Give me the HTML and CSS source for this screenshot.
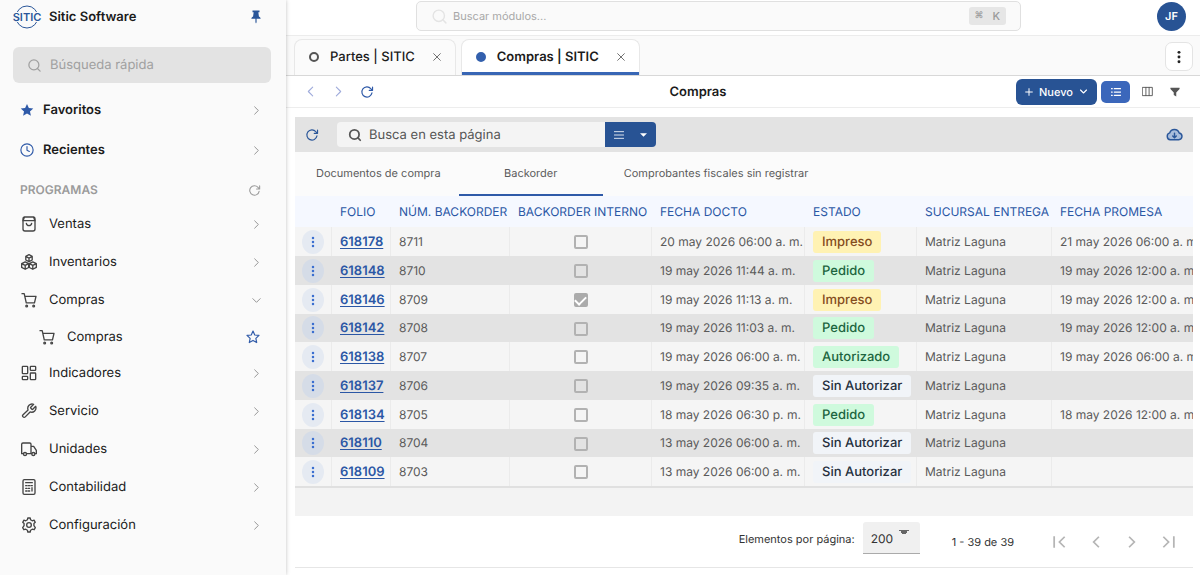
FILE: index.html
```html
<!DOCTYPE html>
<html lang="es">
<head>
<meta charset="utf-8">
<meta name="viewport" content="width=device-width, initial-scale=1">
<title>Compras | SITIC</title>
<link rel="stylesheet" href="styles.css">
</head>
<body>
<svg class="sprite" aria-hidden="true">
  <symbol id="i-search" viewBox="0 0 24 24"><circle cx="11" cy="11" r="8"/><path d="m21 21-4.3-4.3"/></symbol>
  <symbol id="i-right" viewBox="0 0 24 24"><path d="m8 4 8 8-8 8"/></symbol>
  <symbol id="i-left" viewBox="0 0 24 24"><path d="m16 4-8 8 8 8"/></symbol>
  <symbol id="i-down" viewBox="0 0 24 24"><path d="m4 8 8 8 8-8"/></symbol>
  <symbol id="i-reload" viewBox="0 0 24 24"><path d="M20.5 13.5A8.7 8.7 0 1 1 18.500 6.200L21.500 9.200M21.500 3.500v5.700h-5.700"/></symbol>
  <symbol id="i-close" viewBox="0 0 24 24"><path d="m4 4 16 16M20 4 4 20"/></symbol>
  <symbol id="i-dots" viewBox="0 0 24 24"><circle cx="12" cy="4" r="2.500"/><circle cx="12" cy="12" r="2.500"/><circle cx="12" cy="20" r="2.500"/></symbol>
  <symbol id="i-cart" viewBox="0 0 24 24"><path d="M1.500 2.500h3.300l3.100 13.700h12.300L22.500 6.500H6"/><circle cx="8.500" cy="21" r="1.300"/><circle cx="19" cy="21" r="1.300"/></symbol>
</svg>
<div class="app">
  <aside class="sidebar">
    <header class="brand">
      <svg class="logo" viewBox="0 0 30 24" aria-label="SITIC"><circle cx="15" cy="12" r="11"/><rect x="0" y="7" width="30" height="10"/><text x="15" y="16" text-anchor="middle">SITIC</text></svg>
      <strong>Sitic Software</strong>
      <button class="plain pin" aria-label="Fijar menú"><svg class="fill" viewBox="0 0 24 24" width="14" height="14"><path d="M6 1h12v3h-2l1 7c2 1 3 2.500 3 4h-7v6l-1 2-1-2v-6H4c0-1.500 1-3 3-4l1-7H6z"/></svg></button>
    </header>
    <label class="quick"><svg width="15" height="15"><use href="#i-search"/></svg><input type="search" placeholder="Búsqueda rápida" aria-label="Búsqueda rápida"></label>
    <nav>
      <a class="top-link" href="#"><svg class="fill blue" viewBox="0 0 24 24" width="14" height="14"><path d="m12 1.500 3.200 7 7.600.8-5.700 5.100 1.600 7.500-6.700-3.800-6.700 3.800 1.600-7.500L1.200 9.300l7.600-.8z"/></svg><span>Favoritos</span><svg class="chev"><use href="#i-right"/></svg></a>
      <a class="top-link" href="#"><svg class="blue" viewBox="0 0 24 24" width="14" height="14"><circle cx="12" cy="12" r="10.500"/><path d="M12 6v6.500l4 2"/></svg><span>Recientes</span><svg class="chev"><use href="#i-right"/></svg></a>
      <div class="section"><span>PROGRAMAS</span><button class="plain" aria-label="Recargar programas"><svg width="13" height="13"><use href="#i-reload"/></svg></button></div>
      <a class="link" href="#"><svg class="ico" viewBox="0 0 24 24"><rect x="3" y="1.500" width="18" height="21" rx="3"/><path d="M3 7h18M8 11c.8 4.500 7.200 4.500 8 0M5 2 3.500 6M19 2l1.500 4"/></svg><span>Ventas</span><svg class="chev"><use href="#i-right"/></svg></a>
      <a class="link" href="#"><svg class="ico" viewBox="0 0 24 24"><path d="m12 1 4.800 2.500v5.500L12 11.500 7.200 9V3.500zM7.200 3.700 12 6.300l4.800-2.600M12 6.300v5.200M6.300 11.700l5.200 2.600v5.900l-5.200 2.700-5.300-2.700v-5.900zM1 14.400l5.300 2.700 5.200-2.700M6.300 17.100v5.700M17.700 11.700l5.300 2.600v5.900l-5.300 2.700-5.200-2.700v-5.900zM12.500 14.400l5.200 2.700 5.300-2.700M17.700 17.100v5.700"/></svg><span>Inventarios</span><svg class="chev"><use href="#i-right"/></svg></a>
      <a class="link" href="#"><svg class="ico"><use href="#i-cart"/></svg><span>Compras</span><svg class="chev"><use href="#i-down"/></svg></a>
      <div class="sub"><a class="link" href="#"><svg class="ico"><use href="#i-cart"/></svg><span>Compras</span></a><button class="plain star" aria-label="Agregar a favoritos"><svg class="blue" viewBox="0 0 24 24" width="14" height="14"><path d="m12 1.800 3 6.700 7.300.8-5.400 5 1.500 7.200-6.400-3.700-6.400 3.700 1.500-7.200-5.400-5 7.300-.8z"/></svg></button></div>
      <a class="link" href="#"><svg class="ico" viewBox="0 0 24 24"><rect x="2" y="2" width="8" height="11" rx="1"/><rect x="14" y="2" width="8" height="6" rx="1"/><rect x="2" y="17" width="8" height="5" rx="1"/><rect x="14" y="12" width="8" height="10" rx="1"/></svg><span>Indicadores</span><svg class="chev"><use href="#i-right"/></svg></a>
      <a class="link" href="#"><svg class="ico" viewBox="0 0 24 24"><path d="M14.700 6.300a1 1 0 0 0 0 1.400l1.600 1.600a1 1 0 0 0 1.400 0l4.300-4.300a6.500 6.500 0 0 1-8.400 8.400l-7.200 7.400a2.300 2.300 0 0 1-3.300-3.300l7.500-7.100a6.500 6.500 0 0 1 8.400-8.400z"/></svg><span>Servicio</span><svg class="chev"><use href="#i-right"/></svg></a>
      <a class="link" href="#"><svg class="ico" viewBox="0 0 24 24"><path d="M3.500 19H1V5a2 2 0 0 1 2-2h10a2 2 0 0 1 2 2v14H8.500M15 8h4l4 6v5h-2M15 19h1"/><circle cx="6" cy="19.500" r="2.300"/><circle cx="18.500" cy="19.500" r="2.300"/></svg><span>Unidades</span><svg class="chev"><use href="#i-right"/></svg></a>
      <a class="link" href="#"><svg class="ico" viewBox="0 0 24 24"><rect x="3" y="1" width="18" height="22" rx="2"/><path d="M7 5.500h10M7 10h2M11 10h2M15 10h2M7 14h2M11 14h2M16.500 13v5M7 18h2M11 18h2"/></svg><span>Contabilidad</span><svg class="chev"><use href="#i-right"/></svg></a>
      <a class="link" href="#"><svg class="ico" viewBox="0 0 24 24"><path d="M9.600 4.200 10.200 1.500h3.600l.6 2.700 2.500 1.500 2.700-.9 1.800 3.200-2 1.900v3.200l2.100 2.900-1.800 3.100-2.800-.8-2.500 1.500-.6 2.700h-3.600l-.6-2.700-2.500-1.500-2.800.8-1.800-3.100 2.100-2.900V9.900l-2-1.900 1.800-3.200 2.700.9z"/><circle cx="12" cy="12" r="3.500"/></svg><span>Configuración</span><svg class="chev"><use href="#i-right"/></svg></a>
    </nav>
  </aside>

  <main class="main">
    <header class="topbar">
      <label class="modules"><svg width="17" height="17"><use href="#i-search"/></svg><input type="search" placeholder="Buscar módulos..." aria-label="Buscar módulos"><kbd><span class="cmd">⌘</span><span>K</span></kbd></label>
      <button class="avatar">JF</button>
    </header>
    <div class="tabs">
      <div class="tab"><i class="dot"></i><a href="#">Partes | SITIC</a><button class="plain" aria-label="Cerrar Partes"><svg width="10" height="10"><use href="#i-close"/></svg></button></div>
      <div class="tab active"><i class="dot"></i><a href="#">Compras | SITIC</a><button class="plain" aria-label="Cerrar Compras"><svg width="10" height="10"><use href="#i-close"/></svg></button></div>
      <button class="more" aria-label="Más opciones"><svg class="fill" width="14" height="14"><use href="#i-dots"/></svg></button>
    </div>
    <div class="pagebar">
      <div class="history">
        <button class="plain soft" aria-label="Atrás"><svg width="13" height="13"><use href="#i-left"/></svg></button>
        <button class="plain soft" aria-label="Adelante"><svg width="13" height="13"><use href="#i-right"/></svg></button>
        <button class="plain blue" aria-label="Recargar"><svg width="14" height="14"><use href="#i-reload"/></svg></button>
      </div>
      <h1>Compras</h1>
      <div class="actions">
        <button class="new"><svg viewBox="0 0 24 24" width="8" height="8"><path d="M12 2v20M2 12h20"/></svg>Nuevo<svg class="bold" width="9" height="9"><use href="#i-down"/></svg></button>
        <button class="view on" aria-label="Lista"><svg viewBox="0 0 24 24" width="10" height="10"><path d="M8 4h15M8 12h15M8 20h15M1 4h2M1 12h2M1 20h2"/></svg></button>
        <button class="view cols" aria-label="Columnas"><svg viewBox="0 0 24 24" width="11" height="11"><path d="M1.500 3h21v18h-21zM8.500 3v18M15.500 3v18"/></svg></button>
        <button class="view filter" aria-label="Filtrar"><svg class="fill" viewBox="0 0 24 24" width="10" height="10"><path d="M1 2h22v3l-8 8v10l-6-4v-6L1 5z"/></svg></button>
      </div>
    </div>

    <section class="card">
      <div class="tools">
        <button class="plain refresh" aria-label="Actualizar"><svg width="14" height="14"><use href="#i-reload"/></svg></button>
        <div class="find">
          <label><svg width="14" height="14"><use href="#i-search"/></svg><input type="search" placeholder="Busca en esta página" aria-label="Busca en esta página"></label>
          <button aria-label="Opciones de búsqueda"><svg viewBox="0 0 24 24" width="10" height="10"><path d="M1 4h22M1 12h22M1 20h22"/></svg><svg class="fill" viewBox="0 0 8 4" width="7" height="4"><path d="M0 0h8L4 4z"/></svg></button>
        </div>
        <button class="plain cloud" aria-label="Descargar"><svg viewBox="0 0 24 18" width="17" height="13"><path class="tint" d="M6 16.500a5 5 0 0 1-.8-9.700 7 7 0 0 1 13.400 0A4.900 4.900 0 0 1 18 16.500z"/><path d="M12 7v6M9.500 11l2.500 2.500 2.500-2.500"/></svg></button>
      </div>
      <nav class="subtabs"><a href="#">Documentos de compra</a><a class="current" href="#">Backorder</a><a href="#">Comprobantes fiscales sin registrar</a></nav>
      <div class="scroll">
      <table>
        <colgroup><col class="c-menu"><col class="c-folio"><col class="c-num"><col class="c-int"><col class="c-date"><col class="c-state"><col class="c-branch"><col></colgroup>
        <thead><tr><th></th><th>FOLIO</th><th>NÚM. BACKORDER</th><th>BACKORDER INTERNO</th><th>FECHA DOCTO</th><th>ESTADO</th><th>SUCURSAL ENTREGA</th><th>FECHA PROMESA</th></tr></thead>
        <tbody>
          <tr><td><button class="row-menu" aria-label="Menú 618178"><svg><use href="#i-dots"/></svg></button></td><td><a href="#">618178</a></td><td>8711</td><td><input type="checkbox" aria-label="Interno 8711"></td><td>20 may 2026 06:00 a. m.</td><td><span class="chip yellow">Impreso</span></td><td>Matriz Laguna</td><td>21 may 2026 06:00 a. m.</td></tr>
          <tr><td><button class="row-menu" aria-label="Menú 618148"><svg><use href="#i-dots"/></svg></button></td><td><a href="#">618148</a></td><td>8710</td><td><input type="checkbox" aria-label="Interno 8710"></td><td>19 may 2026 11:44 a. m.</td><td><span class="chip green">Pedido</span></td><td>Matriz Laguna</td><td>19 may 2026 12:00 a. m.</td></tr>
          <tr><td><button class="row-menu" aria-label="Menú 618146"><svg><use href="#i-dots"/></svg></button></td><td><a href="#">618146</a></td><td>8709</td><td><input type="checkbox" checked aria-label="Interno 8709"></td><td>19 may 2026 11:13 a. m.</td><td><span class="chip yellow">Impreso</span></td><td>Matriz Laguna</td><td>19 may 2026 12:00 a. m.</td></tr>
          <tr><td><button class="row-menu" aria-label="Menú 618142"><svg><use href="#i-dots"/></svg></button></td><td><a href="#">618142</a></td><td>8708</td><td><input type="checkbox" aria-label="Interno 8708"></td><td>19 may 2026 11:03 a. m.</td><td><span class="chip green">Pedido</span></td><td>Matriz Laguna</td><td>19 may 2026 12:00 a. m.</td></tr>
          <tr><td><button class="row-menu" aria-label="Menú 618138"><svg><use href="#i-dots"/></svg></button></td><td><a href="#">618138</a></td><td>8707</td><td><input type="checkbox" aria-label="Interno 8707"></td><td>19 may 2026 06:00 a. m.</td><td><span class="chip green">Autorizado</span></td><td>Matriz Laguna</td><td>19 may 2026 06:00 a. m.</td></tr>
          <tr><td><button class="row-menu" aria-label="Menú 618137"><svg><use href="#i-dots"/></svg></button></td><td><a href="#">618137</a></td><td>8706</td><td><input type="checkbox" aria-label="Interno 8706"></td><td>19 may 2026 09:35 a. m.</td><td><span class="chip">Sin Autorizar</span></td><td>Matriz Laguna</td><td></td></tr>
          <tr><td><button class="row-menu" aria-label="Menú 618134"><svg><use href="#i-dots"/></svg></button></td><td><a href="#">618134</a></td><td>8705</td><td><input type="checkbox" aria-label="Interno 8705"></td><td>18 may 2026 06:30 p. m.</td><td><span class="chip green">Pedido</span></td><td>Matriz Laguna</td><td>18 may 2026 12:00 a. m.</td></tr>
          <tr><td><button class="row-menu" aria-label="Menú 618110"><svg><use href="#i-dots"/></svg></button></td><td><a href="#">618110</a></td><td>8704</td><td><input type="checkbox" aria-label="Interno 8704"></td><td>13 may 2026 06:00 a. m.</td><td><span class="chip">Sin Autorizar</span></td><td>Matriz Laguna</td><td></td></tr>
          <tr><td><button class="row-menu" aria-label="Menú 618109"><svg><use href="#i-dots"/></svg></button></td><td><a href="#">618109</a></td><td>8703</td><td><input type="checkbox" aria-label="Interno 8703"></td><td>13 may 2026 06:00 a. m.</td><td><span class="chip">Sin Autorizar</span></td><td>Matriz Laguna</td><td></td></tr>
        </tbody>
      </table>
      </div>
      <footer class="pager">
        <label for="size">Elementos por página:</label>
        <select id="size"><option>200</option></select>
        <span class="range">1 - 39 de 39</span>
        <div class="pages">
          <button class="plain" disabled aria-label="Primera página"><svg viewBox="0 0 24 24"><path d="M2 2v20M20 3l-9 9 9 9"/></svg></button>
          <button class="plain" disabled aria-label="Página anterior"><svg viewBox="0 0 24 24"><path d="m17 3-9 9 9 9"/></svg></button>
          <button class="plain" disabled aria-label="Página siguiente"><svg viewBox="0 0 24 24"><path d="m7 3 9 9-9 9"/></svg></button>
          <button class="plain" disabled aria-label="Última página"><svg viewBox="0 0 24 24"><path d="M22 2v20M4 3l9 9-9 9"/></svg></button>
        </div>
      </footer>
    </section>
  </main>
</div>
</body>
</html>
```
FILE: styles.css
```css
* { box-sizing: border-box; }
body { margin: 0; font: 13px/16px Inter, "Liberation Sans", sans-serif; color: #1b1b1b; background: #fff; text-rendering: geometricPrecision; }
a { color: inherit; text-decoration: none; }
button, input, select { font: inherit; color: inherit; text-rendering: inherit; }
button { display: flex; align-items: center; justify-content: center; border: 0; padding: 0; }
input { border: 0; outline: 0; padding: 0; min-width: 0; background: none; }
svg { flex: none; display: block; fill: none; stroke: currentColor; stroke-width: 2; stroke-linecap: round; stroke-linejoin: round; }
svg.fill { fill: currentColor; stroke: none; }
.sprite { width: 0; height: 0; position: absolute; }
.plain { background: none; }
.blue { color: #2f5aa8; }

.app { display: flex; min-height: 100vh; }
.sidebar { flex: none; width: 286px; background: #fafafa; box-shadow: 0 0 4px rgba(0, 0, 0, 0.25); z-index: 1; padding: 0 15px 0 13px; }
.brand { display: flex; align-items: center; height: 33px; gap: 7px; padding-right: 8px; }
.brand strong { flex: 1; font-weight: 600; }
.logo { width: 30px; height: 24px; margin-left: -1px; color: #2a5699; stroke-width: 1; }
.logo rect { fill: #fafafa; stroke: none; }
.logo text { font: 600 11px Inter, sans-serif; fill: currentColor; stroke: none; }
.pin { color: #2a5699; }
.quick { display: flex; align-items: center; gap: 8px; height: 36px; margin: 14px 0 7px; padding: 0 14px; border-radius: 6px; background: #e3e3e3; color: #a0a0a0; }
.quick input { flex: 1; }
input::placeholder { color: inherit; opacity: 1; }
.top-link, .link { display: flex; align-items: center; padding: 0 9px 0 8px; }
.top-link { height: 40px; gap: 9px; padding-left: 7px; font-weight: 600; }
.top-link span, .link span { flex: 1; }
.chev { width: 11px; height: 11px; color: #8c8c8c; stroke-width: 2; }
.section { display: flex; align-items: center; justify-content: space-between; height: 30px; margin-top: 5px; padding: 0 10px 0 7px; font-size: 12px; font-weight: 600; color: #9b9b9b; }
.link { height: 38px; gap: 12px; }
.ico { width: 16px; height: 16px; color: #444; }
.sub { display: flex; align-items: center; padding: 0 11px 0 18px; }
.sub .link { flex: 1; height: 35px; }

.main { flex: 1; min-width: 0; background: #fff; }
.topbar { display: flex; align-items: center; justify-content: space-between; height: 36px; padding: 0 14px 4px 130px; border-bottom: 1px solid #ececec; }
.modules { display: flex; align-items: center; gap: 5px; flex: 0 1 605px; height: 30px; margin-top: 1px; padding: 0 14px; border: 1px solid #e0e0e0; border-radius: 5px; background: #fafafa; font-size: 11px; color: #a8a8a8; }
.modules > svg { color: #e4e4e4; }
.modules input { flex: 1; }
kbd { display: flex; gap: 9px; padding: 0 6px; border-radius: 3px; background: #e6e6e6; font: 500 11px/18px Inter, "DejaVu Sans", sans-serif; color: #999; }
.cmd { font-size: 9px; }
.avatar { flex: none; width: 29px; height: 29px; margin-top: 1px; border-radius: 50%; background: #285394; color: #fff; font-size: 11px; font-weight: 600; }
.tabs { display: flex; align-items: flex-end; gap: 5px; height: 40px; padding: 0 7px 0 8px; border-bottom: 1px solid #d8d8d8; background: #fafafa; }
.tab { display: flex; align-items: center; height: 36px; padding: 0 13px 1px 14px; border: 1px solid #e8e8e8; border-bottom: 0; border-radius: 8px 8px 0 0; background: #fbfbfb; font-weight: 500; }
.tab a { margin: 0 17px 0 11px; }
.tab button { color: #555; }
.dot { width: 10px; height: 10px; border: 2px solid #555; border-radius: 50%; }
.tab.active { background: #fff; box-shadow: inset 0 -3px #3866b5; font-weight: 600; }
.active .dot { border-color: #3360ad; background: #3360ad; }
.more { width: 28px; height: 29px; margin: 0 0 4px auto; border: 1px solid #e4e4e4; border-radius: 7px; background: #fff; color: #222; }
.pagebar { display: grid; grid-template-columns: 1fr auto 1fr; align-items: center; height: 32px; padding: 0 14px 0 18px; border-bottom: 1px solid #ededed; }
.history { display: flex; gap: 15px; }
.soft { color: #9fabdb; }
.pagebar h1 { margin: 0; padding-right: 94px; font-size: 13px; line-height: 16px; font-weight: 600; }
.actions { display: flex; align-items: center; justify-content: flex-end; gap: 4px; }
.new { gap: 6px; width: 81px; height: 26px; border-radius: 6px; background: #285394; color: #fff; font-size: 11px; font-weight: 500; }
.bold, .new svg, .view.on svg { stroke-width: 3; }
.view { width: 29px; height: 22px; border-radius: 5px; background: none; color: #555; }
.view.on { background: #3b67bb; color: #fff; }
.view.cols { width: 26px; }
.view.filter { width: 22px; }

.card { margin: 9px 7px 6px 9px; border-bottom: 1px solid #e6e6e6; }
.tools { display: flex; align-items: center; height: 35px; padding: 0 10px; background: #e3e3e3; }
.refresh { width: 14px; margin-right: 18px; color: #2a5699; }
.find { display: flex; width: 319px; height: 25px; }
.find label { display: flex; flex: 1; align-items: center; gap: 7px; padding: 0 11px; border-radius: 4px 0 0 4px; background: #f4f4f4; color: #555; }
.find label svg { stroke-width: 3; }
.find input { flex: 1; }
.find button { width: 51px; gap: 16px; border-radius: 0 4px 4px 0; background: #285394; color: #fff; }
.cloud { margin-left: auto; color: #2a5699; }
.cloud .tint { fill: #a9bddb; }
.subtabs { display: flex; height: 44px; background: #fbfbfb; font-size: 11px; color: #5c5c5c; }
.subtabs a { display: flex; align-items: center; justify-content: center; padding: 0 18px 0 21px; border-bottom: 2px solid transparent; }
.subtabs .current { width: 144px; padding: 0; border-color: #2f5aa8; }
.scroll { overflow: hidden; padding-bottom: 28px; background: #f3f3f3; }
table { width: 100%; table-layout: fixed; border-collapse: separate; border-spacing: 0; border-bottom: 2px solid #e0e0e0; font-size: 12px; }
.c-menu { width: 37px; }
.c-folio { width: 59px; }
.c-num { width: 119px; }
.c-int { width: 142px; }
.c-date { width: 153px; }
.c-state { width: 112px; }
.c-branch { width: 135px; }
th, td { padding: 0 0 0 8px; text-align: left; white-space: nowrap; overflow: hidden; }
th { height: 31px; background: #f5f8ff; color: #2b57a5; font-weight: 400; }
td { height: 29px; border-right: 1px solid #ebebeb; background: #f5f5f5; color: #5a5a5a; }
td:last-child { border-right: 0; }
tr:nth-child(even) td { background: #e3e3e3; border-color: #e3e3e3; }
tr:nth-child(4n) td { height: 28px; }
td a { color: #2b57a5; font-size: 13px; font-weight: 600; text-decoration: underline; text-underline-offset: 2px; }
.row-menu { width: 22px; height: 24px; border-radius: 50%; background: #e5eaf2; color: #3b6fd0; }
tr:nth-child(even) .row-menu { background: #d5dce7; }
.row-menu svg { width: 12px; height: 12px; fill: currentColor; stroke: none; }
td:first-child { padding-left: 7px; }
td:nth-child(4) { padding: 0; text-align: center; }
td input { display: block; width: 14px; height: 14px; margin: 1px auto 0; appearance: none; border: 2px solid #b2b2b2; border-radius: 2px; }
td input:checked { background: #ababab; border-color: #ababab; }
td input:checked::after { content: ""; display: block; width: 5px; height: 9px; margin: -1px auto 0; border: solid #fff; border-width: 0 2px 2px 0; transform: rotate(45deg); }
.chip { display: inline-block; padding: 0 9px; border-radius: 3px; background: #f1f4f8; color: #26303e; font-size: 13px; line-height: 22px; font-weight: 500; }
.chip.yellow { background: #fff2b3; color: #854d1e; }
.chip.green { background: #cffadd; color: #1d6540; }
.pager { display: flex; align-items: center; justify-content: flex-end; height: 51px; padding: 0 18px; font-size: 11px; color: #333; }
.pager select { width: 57px; height: 32px; margin: 0 32px 8px 8px; padding: 4px 8px 0; appearance: none; border: 0; border-bottom: 1px solid #aaa; border-radius: 3px 3px 0 0; font-size: 12px; background: linear-gradient(to bottom right, #666 50%, transparent 50%) 41px 8px / 5px 5px no-repeat, linear-gradient(to bottom left, #666 50%, transparent 50%) 36px 8px / 5px 5px no-repeat, #f0f0f0; }
.pager label { margin-bottom: 5px; }
.range { margin-right: 39px; }
.pages { display: flex; gap: 22px; color: #b5b5b5; }
.pages svg { width: 14px; height: 14px; stroke-width: 3; stroke-linecap: butt; stroke-linejoin: miter; }
```
